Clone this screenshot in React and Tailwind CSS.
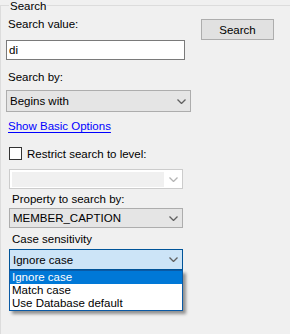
import React from 'react';

const Chevron = ({ color = '#606060' }) => (
  <svg width="9" height="5" viewBox="0 0 9 5" className="shrink-0">
    <path d="M0.5 0.5 L4.5 4.5 L8.5 0.5" fill="none" stroke={color} strokeWidth="1.3" />
  </svg>
);

const Combo = ({ value, className = '', chevron, pr = 'pr-[4px]' }) => (
  <div className={`flex items-center justify-between pl-[3px] ${pr} ${className}`}>
    <span>{value}</span>
    <Chevron color={chevron} />
  </div>
);

export default function App() {
  return (
    <div
      className="w-[290px] h-[334px] bg-[#f0f0f0] overflow-hidden text-[11.5px] leading-[14px] text-black"
      style={{ fontFamily: '"Liberation Sans", Arial, sans-serif' }}
    >
      <div className="relative mt-[5px] h-[329px] border-l border-t border-[#dcdcdc]">
        <span className="absolute -top-[7px] left-[8px] bg-[#f0f0f0] px-[1px] leading-[14px]">Search</span>

        <div className="flex">
          {/* left column */}
          <div className="flex w-[190px] flex-col">
            <div className="ml-[7px] mt-[11px] h-[14px]">Search value:</div>
            <div className="ml-[5px] mt-[9px] flex h-[20px] w-[179px] items-center border border-[#7a7a7a] bg-white pl-[2px]">
              di
            </div>

            <div className="ml-[7px] mt-[10px] h-[14px]">Search by:</div>
            <Combo
              value="Begins with"
              pr="pr-[4px]"
              className="ml-[5px] mt-[6px] h-[22px] w-[185px] border border-[#adadad] bg-[#e5e5e5]"
            />

            <a className="ml-[7px] mt-[7px] h-[14px] w-max text-[#0000ff] underline underline-offset-[2px]">
              Show Basic Options
            </a>

            <div className="ml-[8px] mt-[14px] flex h-[13px] items-center gap-[5px]">
              <div className="h-[13px] w-[13px] border border-[#333333] bg-white" />
              <span>Restrict search to level:</span>
            </div>

            <div className="ml-[8px] mt-[9px] flex h-[20px] w-[174px] items-center justify-between border border-[#cccccc] bg-white pl-[2px] pr-[4px]">
              <div className="h-[15px] w-[152px] bg-[#f0f0f0]" />
              <Chevron color="#b4b4b4" />
            </div>

            <div className="ml-[11px] mt-[3px] h-[14px]">Property to search by:</div>
            <Combo
              value="MEMBER_CAPTION"
              className="ml-[8px] mt-[2px] h-[20px] w-[174px] border border-[#adadad] bg-[#e5e5e5]"
            />

            <div className="ml-[11px] mt-[4px] h-[14px]">Case sensitivity</div>
            <div className="relative ml-[8px] mt-[3px] w-[174px]">
              <Combo
                value="Ignore case"
                className="h-[21px] w-[174px] border border-[#005499] bg-[#cce4f7]"
              />
              <div className="absolute left-0 top-full w-[174px] border border-[#0b5aa5] bg-white shadow-[3px_3px_3px_rgba(0,0,0,0.4)]">
                <div className="h-[13px] bg-[#0078d7] pl-[2px] leading-[13px] text-white">Ignore case</div>
                <div className="h-[13px] pl-[2px] leading-[13px]">Match case</div>
                <div className="h-[13px] pl-[2px] leading-[13px]">Use Database default</div>
              </div>
            </div>
          </div>

          {/* right column */}
          <div className="ml-[10px] mt-[13px]">
            <button className="flex h-[21px] w-[73px] items-center justify-center border border-[#adadad] bg-[#e1e1e1]">
              Search
            </button>
          </div>
        </div>
      </div>
    </div>
  );
}
